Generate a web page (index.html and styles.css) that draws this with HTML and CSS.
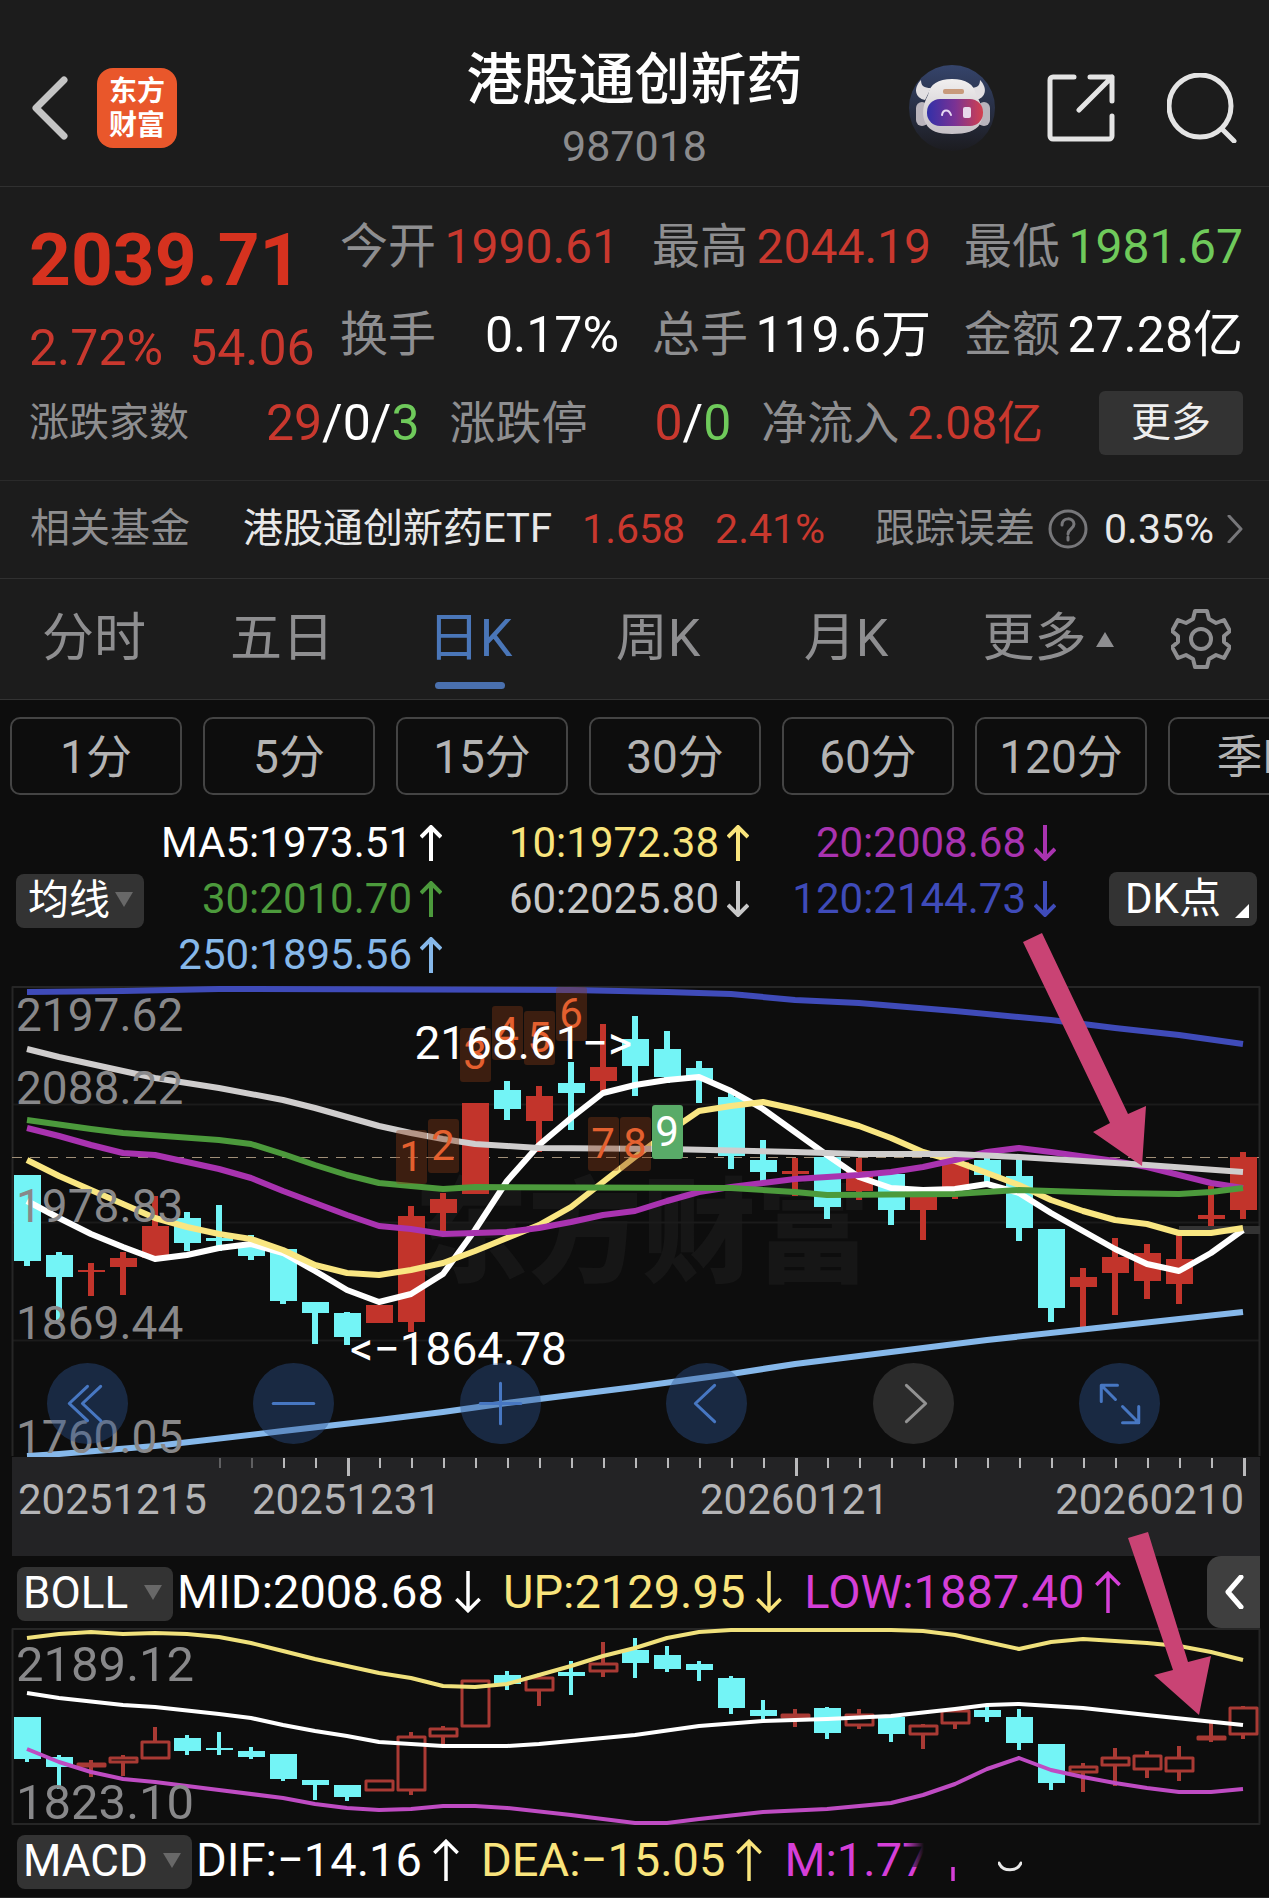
FILE: index.html
```html
<!DOCTYPE html>
<html lang="zh-CN">
<head>
    <meta charset="UTF-8">
    <meta name="viewport" content="width=device-width, initial-scale=1.0">
    <title>港股通创新药 987018</title>
    <link rel="stylesheet" href="styles.css">
</head>
<body>
    <svg class="defs" width="0" height="0">
        <symbol id="up" viewBox="0 0 22 36"><path d="M11 36V2M1 12L11 2l10 10"/></symbol>
        <symbol id="down" viewBox="0 0 22 36"><path d="M11 0v34M1 24l10 10 10-10"/></symbol>
    </svg>

    <header class="header">
        <div class="header-left">
            <a href="#" class="back" aria-label="返回">
                <svg width="36" height="64" viewBox="0 0 36 64"><path d="M32 4L4 32l28 28"/></svg>
            </a>
            <div class="logo">东方<br>财富</div>
        </div>
        <div class="header-title">
            <h1>港股通创新药</h1>
            <p>987018</p>
        </div>
        <div class="header-right">
            <svg class="avatar" width="86" height="86" viewBox="0 0 86 86">
                <defs>
                    <linearGradient id="sky" x1="0" y1="0" x2="0" y2="1">
                        <stop offset="0" stop-color="#35446b"/>
                        <stop offset="1" stop-color="#1c1c20"/>
                    </linearGradient>
                    <linearGradient id="visor" x1="0" y1="0" x2="1" y2="0">
                        <stop offset="0" stop-color="#3230a8"/>
                        <stop offset="0.5" stop-color="#7a3294"/>
                        <stop offset="1" stop-color="#d2404e"/>
                    </linearGradient>
                    <linearGradient id="shell" x1="0" y1="0" x2="0" y2="1">
                        <stop offset="0" stop-color="#f1efef"/>
                        <stop offset="1" stop-color="#c5c0c6"/>
                    </linearGradient>
                </defs>
                <circle cx="43" cy="43" r="43" fill="url(#sky)"/>
                <path d="M12 15c-8 8-6 18 4 20l6-12c-7 0-10-2-10-8zM71 15c8 8 6 18-4 20l-6-12c7 0 10-2 10-8z" fill="#e2dfe2"/>
                <rect x="7" y="37" width="12" height="24" rx="6" fill="#b9b4bc"/>
                <rect x="69" y="37" width="12" height="24" rx="6" fill="#b9b4bc"/>
                <path d="M43 14c14 0 22 5 24 16 6 9 9 21 4 29-4 7-14 10-28 10s-22-3-26-10c-5-8-3-20 2-29 2-11 10-16 24-16z" fill="url(#shell)"/>
                <rect x="34" y="24" width="21" height="5" rx="2" fill="#c89a7c"/>
                <rect x="18" y="34" width="56" height="27" rx="13" fill="url(#visor)"/>
                <path d="M33 50c1-6 7-6 9 0" fill="none" stroke="#e6d8f2" stroke-width="2"/>
                <rect x="54" y="42" width="8" height="11" rx="2" fill="#e8d8ea"/>
            </svg>
            <a href="#" aria-label="分享">
                <svg width="68" height="68" viewBox="0 0 68 68"><path d="M27 3H6a3 3 0 0 0-3 3v56a3 3 0 0 0 3 3h56a3 3 0 0 0 3-3V42M43 3h22v24M65 3L32 36"/></svg>
            </a>
            <a href="#" aria-label="搜索">
                <svg width="70" height="70" viewBox="0 0 70 70"><circle cx="33" cy="33" r="31"/><path d="M55 56l12 12"/></svg>
            </a>
        </div>
    </header>

    <section class="quote">
        <div class="quote-top">
            <div class="price">
                <strong>2039.71</strong>
                <p><span>2.72%</span><span>54.06</span></p>
            </div>
            <dl class="stats">
                <div><dt>今开</dt><dd class="red">1990.61</dd></div>
                <div><dt>最高</dt><dd class="red">2044.19</dd></div>
                <div><dt>最低</dt><dd class="green">1981.67</dd></div>
                <div><dt>换手</dt><dd class="strong">0.17%</dd></div>
                <div><dt>总手</dt><dd class="strong">119.6万</dd></div>
                <div><dt>金额</dt><dd class="strong">27.28亿</dd></div>
            </dl>
        </div>
        <div class="quote-bottom">
            <div class="pair"><span class="small">涨跌家数</span><b><i class="red">29</i>/0/<i class="green">3</i></b></div>
            <div class="pair"><span>涨跌停</span><b><i class="red">0</i>/<i class="green">0</i></b></div>
            <div class="inflow"><span>净流入</span><span class="red">2.08亿</span></div>
            <button class="more">更多</button>
        </div>
    </section>

    <section class="fund">
        <span class="label">相关基金</span>
        <a href="#" class="fund-name">港股通创新药ETF</a>
        <span class="red">1.658</span>
        <span class="red">2.41%</span>
        <div class="tracking">
            <span class="label">跟踪误差</span>
            <svg width="40" height="40" viewBox="0 0 40 40"><circle cx="20" cy="20" r="18"/><path d="M14 16c0-8 12-8 12-1 0 5-6 5-6 10M20 28v3"/></svg>
            <span class="error">0.35%</span>
            <svg width="16" height="28" viewBox="0 0 16 28"><path d="M2 1l12 13L2 27"/></svg>
        </div>
    </section>

    <nav class="tabs">
        <a href="#">分时</a>
        <a href="#">五日</a>
        <a href="#" class="active">日K</a>
        <a href="#">周K</a>
        <a href="#">月K</a>
        <a href="#">更多<i class="tri-up"></i></a>
        <a href="#" class="gear" aria-label="设置">
            <svg width="60" height="60" viewBox="0 0 60 60"><path d="M24 2h12l2 8 7 4 8-3 6 11-6 5v6l6 5-6 11-8-3-7 4-2 8H24l-2-8-7-4-8 3-6-11 6-5v-6l-6-5 6-11 8 3 7-4z"/><circle cx="30" cy="30" r="10"/></svg>
        </a>
    </nav>

    <div class="periods">
        <button>1分</button>
        <button>5分</button>
        <button>15分</button>
        <button>30分</button>
        <button>60分</button>
        <button>120分</button>
        <button>季K</button>
    </div>

    <div class="ma">
        <div class="picker picker-ma"><select aria-label="主图指标"><option>均线</option></select></div>
        <div class="ma-values">
            <span class="c-white">MA5:1973.51<svg><use href="#up"/></svg></span>
            <span class="c-yellow">10:1972.38<svg><use href="#up"/></svg></span>
            <span class="c-purple">20:2008.68<svg><use href="#down"/></svg></span>
            <span class="c-green">30:2010.70<svg><use href="#up"/></svg></span>
            <span class="c-grey">60:2025.80<svg><use href="#down"/></svg></span>
            <span class="c-blue">120:2144.73<svg><use href="#down"/></svg></span>
            <span class="c-sky">250:1895.56<svg><use href="#up"/></svg></span>
        </div>
        <button class="dk">DK点</button>
    </div>

    <div class="chart">
        <svg id="kline" viewBox="12 985 1248 570">
            <text class="watermark" x="414" y="1272">东方财富</text>
            <path class="grid" d="M12 1103.5H1259M12 1221.5H1259M12 1339.5H1259"/>
            <path class="frame" d="M12.5 1455V986H1259.5V1455"/>
            <rect x="1179" y="1225" width="81" height="8" fill="#333"/>
            <path class="last-price" d="M12 1156.5H1259"/>
            <g id="candles"></g>
            <g id="lines"></g>
            <g id="badges"></g>
            <rect x="12" y="1456" width="1248" height="99" fill="#232325"/>
            <g id="ticks"></g>
            <g class="price-axis">
                <text x="16" y="1030">2197.62</text>
                <text x="16" y="1103">2088.22</text>
                <text x="16" y="1221">1978.83</text>
                <text x="16" y="1338">1869.44</text>
                <text x="16" y="1452">1760.05</text>
            </g>
            <g class="date-axis">
                <text x="18" y="1513">20251215</text>
                <text x="252" y="1513">20251231</text>
                <text x="700" y="1513">20260121</text>
                <text x="1244" y="1513" text-anchor="end">20260210</text>
            </g>
            <text class="extreme" x="632" y="1058" text-anchor="end">2168.61−&gt;</text>
            <text class="extreme" x="350" y="1364">&lt;−1864.78</text>
            <path class="pointer" d="M1023 941l19-9 86 181 18-8-4 60-49-34 17-9z"/>
        </svg>
        <div class="tools">
            <button aria-label="最早"><svg viewBox="0 0 80 80"><path d="M40 23L22 40l18 17M53 23L35 40l18 17"/></svg></button>
            <button aria-label="缩小"><svg viewBox="0 0 80 80"><path d="M20 40h40"/></svg></button>
            <button aria-label="放大"><svg viewBox="0 0 80 80"><path d="M20 40h40M40 20v40"/></svg></button>
            <button aria-label="左移"><svg viewBox="0 0 80 80"><path d="M48 22L29 40l19 18"/></svg></button>
            <button aria-label="右移" class="off"><svg viewBox="0 0 80 80"><path d="M33 22l19 18-19 18"/></svg></button>
            <button aria-label="全屏"><svg viewBox="0 0 80 80"><path d="M38 22H22v16M23 23l13 13M43 43l15 15M59 43v16H43"/></svg></button>
        </div>
    </div>

    <div class="indicator">
        <div class="picker picker-boll"><select aria-label="副图指标一"><option>BOLL</option></select></div>
        <span class="c-white">MID:2008.68<svg><use href="#down"/></svg></span>
        <span class="c-yellow">UP:2129.95<svg><use href="#down"/></svg></span>
        <span class="c-pink">LOW:1887.40<svg><use href="#up"/></svg></span>
        <button class="fold" aria-label="展开"><svg width="20" height="34" viewBox="0 0 20 34"><path d="M17 2L4 17l13 15"/></svg></button>
    </div>

    <div class="chart">
        <svg id="boll" viewBox="12 1627 1248 197">
            <rect class="frame" x="12.5" y="1628" width="1247" height="195"/>
            <g id="boll-candles"></g>
            <g id="boll-lines"></g>
            <g class="price-axis large">
                <text x="16" y="1680">2189.12</text>
                <text x="16" y="1818">1823.10</text>
            </g>
            <path class="pointer" d="M1128 1537l20-6 40 130 23-6-12 59-45-40 19-5z"/>
        </svg>
    </div>

    <div class="indicator last">
        <div class="picker picker-macd"><select aria-label="副图指标二"><option>MACD</option></select></div>
        <span class="c-white">DIF:−14.16<svg><use href="#up"/></svg></span>
        <span class="c-yellow">DEA:−15.05<svg><use href="#up"/></svg></span>
        <span class="c-pink smudged">M:1.77<svg><use href="#up"/></svg></span>
        <svg class="arc" width="24" height="12" viewBox="0 0 24 12"><path d="M1 2c4 9 18 9 22 0"/></svg>
    </div>

    <script>
        const STEP = 32;
        const FIRST = 27;
        const UP = '#c2342b';
        const DOWN = '#73f4f6';

        // kind, body top, body bottom, high, low
        const candles = [
            ['d', 1174, 1260, 1174, 1265], ['d', 1254, 1276, 1251, 1320], ['u', 1269, 1271, 1262, 1295],
            ['u', 1257, 1266, 1251, 1294], ['u', 1225, 1257, 1195, 1260], ['d', 1217, 1242, 1211, 1250],
            ['d', 1237, 1240, 1204, 1250], ['d', 1243, 1255, 1234, 1259], ['d', 1248, 1300, 1248, 1303],
            ['d', 1301, 1312, 1301, 1343], ['d', 1312, 1336, 1311, 1344], ['u', 1304, 1322, 1304, 1322],
            ['u', 1215, 1321, 1205, 1331], ['u', 1198, 1212, 1192, 1232], ['u', 1102, 1193, 1102, 1193],
            ['d', 1089, 1108, 1080, 1119], ['u', 1095, 1120, 1085, 1151], ['d', 1082, 1092, 1061, 1129],
            ['u', 1066, 1080, 1023, 1093], ['d', 1038, 1065, 1015, 1095], ['d', 1048, 1076, 1030, 1082],
            ['d', 1067, 1079, 1060, 1102], ['d', 1096, 1155, 1090, 1168], ['d', 1159, 1171, 1139, 1180],
            ['u', 1170, 1173, 1157, 1195], ['d', 1156, 1206, 1154, 1218], ['u', 1170, 1190, 1157, 1199],
            ['d', 1173, 1209, 1171, 1224], ['u', 1192, 1209, 1189, 1239], ['u', 1161, 1187, 1159, 1198],
            ['d', 1159, 1174, 1152, 1184], ['d', 1175, 1227, 1157, 1240], ['d', 1228, 1307, 1228, 1321],
            ['u', 1276, 1286, 1267, 1326], ['u', 1256, 1272, 1237, 1314], ['u', 1252, 1280, 1243, 1298],
            ['u', 1258, 1283, 1233, 1303], ['u', 1214, 1218, 1185, 1225], ['u', 1156, 1209, 1151, 1218]
        ];

        // each line is a list of index, y
        const maLines = [
            ['#3f4bb9', [0,991, 3,990, 6,988, 17,989, 20,991, 22,993, 24,999, 26,1002, 29,1010, 32,1019, 34,1027, 36,1034, 38,1043]],
            ['#86b8ea', [0,1455, 1,1453, 4,1445, 8,1430, 11,1419, 13,1411, 15,1402, 19,1386, 22,1373, 24,1363, 28,1347, 30,1339, 34,1325, 36,1318, 38,1311]],
            ['#ffffff', [0,1200, 1,1217, 2,1233, 3,1246, 4,1258, 5,1254, 6,1247, 7,1243, 8,1252, 9,1270, 10,1289, 11,1301, 12,1293, 13,1273, 14,1229, 15,1180, 16,1144, 17,1117, 18,1092, 19,1084, 20,1079, 21,1076, 22,1090, 23,1108, 24,1131, 25,1154, 26,1176, 27,1187, 28,1189, 29,1188, 30,1183, 31,1192, 32,1212, 33,1230, 34,1248, 35,1263, 36,1270, 37,1252, 38,1229]],
            ['#f9e682', [0,1159, 1,1175, 2,1189, 3,1203, 4,1217, 5,1226, 6,1233, 7,1238, 8,1249, 9,1264, 10,1272, 11,1274, 12,1269, 13,1262, 14,1250, 15,1237, 16,1224, 17,1206, 18,1181, 19,1156, 20,1132, 21,1110, 22,1105, 23,1101, 24,1108, 25,1116, 26,1125, 27,1137, 28,1151, 29,1160, 30,1172, 31,1184, 32,1199, 33,1210, 34,1219, 35,1223, 36,1232, 37,1232, 38,1227]],
            ['#a933b0', [0,1127, 1,1135, 2,1144, 3,1152, 4,1154, 5,1161, 6,1168, 7,1177, 8,1190, 9,1202, 10,1214, 11,1225, 12,1228, 13,1233, 15,1231, 16,1227, 17,1221, 18,1214, 19,1210, 20,1200, 21,1191, 22,1186, 23,1182, 24,1178, 26,1174, 27,1171, 28,1166, 29,1159, 30,1151, 31,1147, 32,1151, 34,1160, 35,1166, 36,1174, 37,1182, 38,1187]],
            ['#4c9a3c', [0,1119, 2,1128, 3,1132, 6,1139, 7,1143, 8,1153, 9,1164, 10,1174, 11,1182, 13,1188, 14,1186, 22,1187, 24,1191, 25,1194, 29,1193, 31,1189, 34,1192, 36,1193, 37,1191, 38,1187]],
            ['#cfcdcd', [0,1048, 1,1056, 3,1070, 4,1077, 6,1087, 8,1099, 9,1107, 10,1116, 11,1125, 12,1132, 13,1138, 14,1143, 15,1145, 16,1147, 20,1148, 24,1151, 26,1153, 29,1153, 31,1156, 33,1160, 35,1164, 38,1171]]
        ];

        const bollLines = [
            ['#f0e17c', [0,1637, 1,1633, 2,1631, 3,1633, 4,1632, 5,1633, 6,1636, 7,1642, 8,1650, 9,1658, 10,1665, 11,1672, 12,1677, 13,1685, 14,1686, 15,1683, 16,1674, 17,1665, 18,1655, 19,1647, 20,1637, 21,1631, 22,1629, 27,1629, 28,1630, 29,1634, 30,1641, 31,1648, 32,1641, 33,1638, 35,1642, 36,1645, 37,1651, 38,1659]],
            ['#ffffff', [0,1692, 1,1697, 3,1704, 4,1706, 6,1713, 7,1717, 8,1724, 9,1730, 10,1735, 11,1741, 13,1745, 15,1745, 16,1743, 19,1734, 21,1725, 23,1720, 25,1718, 27,1715, 29,1708, 30,1704, 31,1703, 33,1707, 35,1714, 38,1724]],
            ['#bf4cc3', [0,1748, 1,1761, 2,1771, 3,1778, 4,1781, 6,1789, 8,1797, 9,1803, 10,1807, 11,1809, 12,1808, 13,1805, 14,1805, 15,1807, 17,1814, 19,1822, 20,1822, 21,1818, 23,1811, 25,1808, 27,1802, 28,1794, 29,1783, 30,1768, 31,1757, 32,1769, 33,1776, 34,1782, 35,1787, 36,1791, 37,1791, 38,1788]]
        ];

        // label, candle index, top
        const badges = [
            [1, 12, 1129], [2, 13, 1118], [3, 14, 1027], [4, 15, 1005], [5, 16, 1010],
            [6, 17, 986], [7, 18, 1116], [8, 19, 1116], [9, 20, 1104]
        ];

        const x = i => FIRST + i * STEP;

        function drawLines(id, lines, width) {
            document.getElementById(id).innerHTML = lines.map(([color, data]) => {
                let points = '';
                for (let i = 0; i < data.length; i += 2) {
                    points += `${x(data[i])},${data[i + 1]} `;
                }
                return `<polyline points="${points}" fill="none" stroke="${color}" stroke-width="${width}"/>`;
            }).join('');
        }

        document.getElementById('candles').innerHTML = candles.map(([kind, top, bottom, high, low], i) => {
            const color = kind === 'u' ? UP : DOWN;
            return `<rect x="${x(i) - 13}" y="${top}" width="27" height="${bottom - top}" fill="${color}"/>
                <rect x="${x(i) - 3}" y="${high}" width="6" height="${low - high}" fill="${color}"/>`;
        }).join('');

        // the lower chart shows the same candles on a flatter scale, rising days hollow
        const flat = y => Math.round(1716 + (y - 1174) * 0.494);

        document.getElementById('boll-candles').innerHTML = candles.map(([kind, top, bottom, high, low], i) => {
            const [t, b, h, l] = [top, bottom, high, low].map(flat);
            if (kind === 'd') {
                return `<rect x="${x(i) - 13}" y="${t}" width="27" height="${Math.max(b - t, 2)}" fill="${DOWN}"/>
                    <rect x="${x(i) - 2}" y="${h}" width="4" height="${l - h}" fill="${DOWN}"/>`;
            }
            return `<rect x="${x(i) - 13}" y="${t}" width="27" height="${Math.max(b - t, 2)}" fill="none" stroke="#a93a34" stroke-width="3"/>
                <path d="M${x(i)} ${h}V${t}M${x(i)} ${b}V${l}" stroke="#a93a34" stroke-width="4"/>`;
        }).join('');

        document.getElementById('badges').innerHTML = badges.map(([label, i, top]) =>
            `<g class="badge${label === 9 ? ' done' : ''}">
                <rect x="${x(i) - 15}" y="${top}" width="31" height="54" rx="3"/>
                <text x="${x(i)}" y="${top + 41}">${label}</text>
            </g>`
        ).join('');

        let ticks = '';
        for (let i = 6; i < candles.length; i++) {
            const major = i % 14 === 10;
            ticks += `<rect x="${x(i)}" y="1457" width="${major ? 3 : 2}" height="${major ? 18 : 10}" fill="#b9b9bb" opacity="${i < 8 ? 0.4 : 1}"/>`;
        }
        document.getElementById('ticks').innerHTML = ticks;

        drawLines('lines', maLines, 6);
        drawLines('boll-lines', bollLines, 4);
    </script>
</body>
</html>
```
FILE: styles.css
```css
* {
    box-sizing: border-box;
}
body {
    margin: 0;
    background: #0d0d0d;
    color: #fff;
    font-family: Roboto, "Noto Sans CJK SC", sans-serif;
    overflow-x: hidden;
}
h1, p, dl, dd {
    margin: 0;
}
a {
    color: inherit;
    text-decoration: none;
}
i {
    font-style: normal;
}
button, select {
    font: inherit;
    color: inherit;
    border: none;
    padding: 0;
    cursor: pointer;
}
svg {
    display: block;
    flex: none;
    fill: none;
    stroke-linecap: round;
    stroke-linejoin: round;
}
.defs {
    position: absolute;
}
.red {
    color: #c9382e;
}
.green {
    color: #6fca5b;
}

/* header */
.header {
    display: grid;
    grid-template-columns: 1fr auto 1fr;
    align-items: center;
    padding: 42px 32px 12px;
    background: #1c1c1c;
    border-bottom: 1px solid #303030;
}
.header-left, .header-right {
    display: flex;
    align-items: center;
}
.header-left {
    gap: 29px;
}
.header-right {
    justify-content: flex-end;
    gap: 52px;
    stroke: #e4e4e4;
    stroke-width: 5;
}
.back {
    stroke: #c4c4c4;
    stroke-width: 7;
}
.avatar {
    stroke: none;
}
.logo {
    width: 80px;
    height: 80px;
    padding-top: 7px;
    border-radius: 16px;
    background: #e9572b;
    font-size: 28px;
    font-weight: 700;
    line-height: 34px;
    text-align: center;
}
.header-title {
    text-align: center;
}
.header-title h1 {
    font-size: 56px;
    font-weight: 500;
    line-height: 76px;
}
.header-title p {
    font-size: 43px;
    line-height: 56px;
    color: #8b8b8d;
}

/* quote */
.quote {
    padding: 16px 26px 13px 29px;
    background: #1c1c1c;
    border-bottom: 1px solid #2a2a2a;
}
.quote-top {
    display: grid;
    grid-template-columns: 311px 1fr;
}
.price {
    color: #d6321f;
}
.price strong {
    display: block;
    margin-top: 15px;
    font-size: 73px;
    line-height: 84px;
}
.price p {
    display: flex;
    gap: 26px;
    margin-top: 18px;
    font-size: 50px;
    line-height: 56px;
    color: #c9382e;
}
.stats {
    display: grid;
    grid-template-columns: repeat(3, 1fr);
    column-gap: 33px;
    font-size: 48px;
    line-height: 88px;
    white-space: nowrap;
}
.stats div {
    display: flex;
    justify-content: space-between;
}
.stats dt, .quote-bottom, .label {
    color: #8e8e90;
}
.stats .strong {
    font-size: 50px;
}
.quote-bottom {
    display: grid;
    grid-template-columns: 391fr 282fr 308fr 144px;
    column-gap: 30px;
    align-items: center;
    font-size: 46px;
    line-height: 88px;
    white-space: nowrap;
}
.pair {
    display: flex;
    justify-content: space-between;
}
.pair .small {
    font-size: 40px;
}
.pair b {
    font-size: 50px;
    font-weight: 400;
    color: #fff;
}
.inflow {
    display: flex;
    gap: 8px;
}
.more {
    height: 64px;
    border-radius: 6px;
    background: #333;
    font-size: 40px;
    line-height: 62px;
    color: #eee;
}

/* related fund */
.fund {
    display: flex;
    align-items: center;
    gap: 30px;
    height: 98px;
    padding: 0 26px 2px 30px;
    background: #1c1c1c;
    border-bottom: 1px solid #303030;
    font-size: 40px;
    line-height: 48px;
    white-space: nowrap;
}
.fund .red, .error {
    font-size: 41px;
}
.fund-name {
    margin-left: 23px;
    color: #e8e8e8;
}
.tracking {
    display: flex;
    align-items: center;
    gap: 13px;
    margin-left: auto;
    stroke: #77777a;
    stroke-width: 3;
}
.error {
    margin-left: 3px;
    color: #e8e8e8;
}

/* tabs */
.tabs {
    display: grid;
    grid-template-columns: repeat(5, 188fr) 216fr 90fr 23fr;
    height: 121px;
    background: #1c1c1c;
    border-bottom: 1px solid #333;
    font-size: 52px;
    line-height: 120px;
    color: #8e8e90;
}
.tabs a {
    display: flex;
    position: relative;
    justify-content: center;
    align-items: center;
}
.tabs .active {
    color: #4a76b8;
}
.tabs .active::after {
    content: "";
    position: absolute;
    bottom: 10px;
    width: 70px;
    height: 7px;
    border-radius: 4px;
    background: #4a70ae;
}
.tri-up {
    margin-left: 9px;
    border: 9px solid transparent;
    border-top: none;
    border-bottom: 15px solid #8e8e90;
}
.gear {
    stroke: #8e8e90;
    stroke-width: 4;
}

/* periods */
.periods {
    display: flex;
    gap: 21px;
    margin: 17px 0 20px 10px;
    overflow: hidden;
}
.periods button {
    flex: none;
    width: 172px;
    height: 78px;
    padding-bottom: 6px;
    border: 2px solid #444;
    border-radius: 10px;
    background: transparent;
    font-size: 46px;
    color: #b4b4b4;
}

/* moving averages */
.ma {
    display: flex;
    align-items: center;
    padding: 0 12px 3px 16px;
    font-size: 42px;
    line-height: 56px;
}
.ma-values {
    display: grid;
    flex: 1;
    grid-template-columns: 298fr 307fr 307fr;
    padding-right: 53px;
}
.ma-values span {
    display: flex;
    justify-content: flex-end;
    align-items: center;
    gap: 8px;
}
.ma-values svg {
    width: 22px;
    height: 36px;
    stroke: currentColor;
    stroke-width: 4;
    stroke-linecap: butt;
    stroke-linejoin: miter;
}
.c-white { color: #fff; }
.c-yellow { color: #f9e47c; }
.c-purple { color: #a933b0; }
.c-pink { color: #d53fd8; }
.c-green { color: #4c9a3c; }
.c-grey { color: #c8c8c8; }
.c-blue { color: #3f4bb9; }
.c-sky { color: #86b8ea; }
.picker {
    position: relative;
    flex: none;
    height: 54px;
}
.picker select {
    width: 100%;
    height: 100%;
    padding: 0 0 2px 6px;
    border-radius: 8px;
    background: #333;
    appearance: none;
    font-size: 44px;
    line-height: 52px;
}
.picker::after {
    content: "";
    position: absolute;
    top: 20px;
    right: 11px;
    border: 9px solid transparent;
    border-bottom: none;
    border-top: 15px solid #686868;
    pointer-events: none;
}
.picker-ma {
    width: 128px;
}
.picker-ma select {
    padding-left: 12px;
    font-size: 41px;
}
.picker-boll {
    width: 156px;
}
.picker-macd {
    width: 175px;
}
.dk {
    position: relative;
    width: 148px;
    height: 54px;
    padding-right: 20px;
    border-radius: 8px;
    background: #333;
    font-size: 42px;
    line-height: 52px;
}
.dk::after {
    content: "";
    position: absolute;
    right: 8px;
    bottom: 8px;
    border-left: 14px solid transparent;
    border-bottom: 14px solid #fff;
}

/* charts */
.chart {
    position: relative;
    margin: 0 9px 0 12px;
}
.chart > svg {
    width: 100%;
    height: auto;
    overflow: visible;
    stroke-linecap: butt;
    pointer-events: none;
}
.chart text {
    fill: #fff;
    font-size: 46px;
}
.chart .watermark {
    fill: #161616;
    font-size: 114px;
    font-weight: 900;
}
.grid {
    stroke: #1b1b1b;
    stroke-width: 2;
}
.frame {
    stroke: #262626;
    stroke-width: 2;
}
.last-price {
    stroke: #a08f78;
    stroke-width: 1;
    stroke-dasharray: 10 8;
}
.chart .price-axis text {
    fill: #88888a;
}
.chart .large text {
    font-size: 49px;
}
.chart .date-axis text {
    fill: #b4b4b6;
    font-size: 42px;
}
.badge rect {
    fill: #8a3a14;
    fill-opacity: 0.38;
}
.chart .badge text {
    fill: #e4602f;
    font-size: 42px;
    text-anchor: middle;
}
.chart .done rect {
    fill: #59ab68;
    fill-opacity: 1;
}
.chart .done text {
    fill: #fff;
}
.pointer {
    fill: #c94374;
}
.tools {
    position: absolute;
    display: flex;
    justify-content: space-between;
    left: 35px;
    right: 100px;
    bottom: 112px;
}
.tools button {
    width: 81px;
    height: 81px;
    border-radius: 50%;
    background: rgba(45, 84, 148, 0.4);
    stroke: #4777c2;
    stroke-width: 3;
}
.tools .off {
    background: #2b2b2b;
    stroke: #929292;
}

/* indicator bars */
.indicator {
    display: flex;
    position: relative;
    align-items: center;
    height: 72px;
    padding-left: 17px;
    font-size: 47px;
    line-height: 54px;
    white-space: nowrap;
}
.indicator span {
    display: flex;
    align-items: center;
    gap: 11px;
    margin-right: 22px;
}
.indicator .picker {
    margin-right: 4px;
}
.indicator span svg {
    width: 26px;
    height: 42px;
    stroke: currentColor;
    stroke-width: 3;
    stroke-linecap: butt;
    stroke-linejoin: miter;
}
.fold {
    display: flex;
    align-items: center;
    justify-content: center;
    width: 53px;
    height: 72px;
    margin: 0 9px 0 auto;
    border-radius: 14px 0 0 14px;
    background: #3f3f3f;
    stroke: #fff;
    stroke-width: 5;
}
.last {
    height: 74px;
    padding-bottom: 2px;
    border-bottom: 2px solid #262626;
}
/* upper part of the last value is rubbed out */
.smudged {
    position: relative;
}
.smudged::after {
    content: "";
    position: absolute;
    top: 0;
    right: 0;
    width: 62px;
    height: 34px;
    background: linear-gradient(to right, transparent, #0d0d0d 20px);
}
.arc {
    margin: 14px 0 0 10px;
    stroke: #e8e8e8;
    stroke-width: 3;
}
```
